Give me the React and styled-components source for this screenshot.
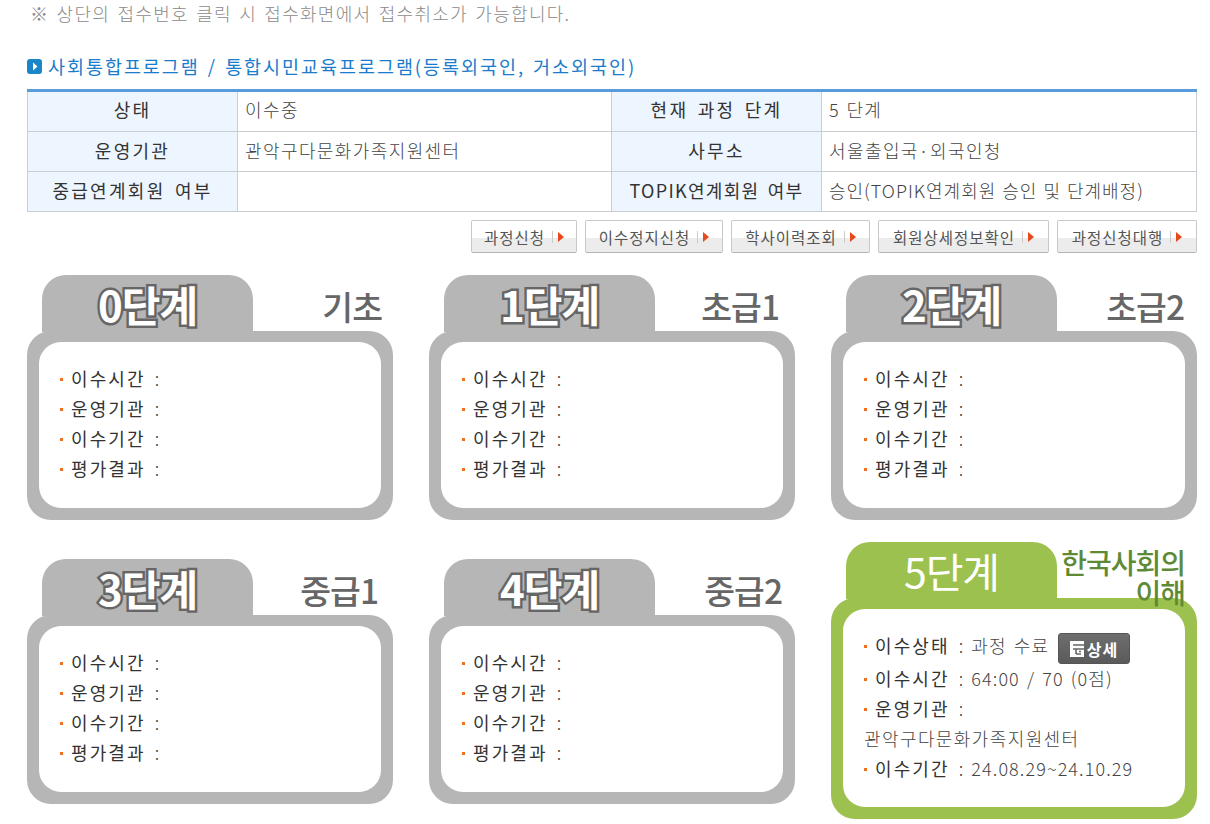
import React from 'react';
import styled, { createGlobalStyle } from 'styled-components';

const GlobalStyle = createGlobalStyle`
  html, body {
    margin: 0;
    padding: 0;
    background: #fff;
  }
  body {
    font-family: "Noto Sans CJK KR", "Liberation Sans", sans-serif;
    color: #333;
  }
`;

const Page = styled.div`
  width: 1170px;
  padding: 0 13px 0 27px;
`;

const Notice = styled.p`
  margin: 0;
  padding-left: 3px;
  height: 28px;
  font-size: 18px;
  line-height: 27px;
  letter-spacing: 1.3px;
  word-spacing: 2px;
  color: #8a8a8a;
  font-weight: 300;
  white-space: nowrap;
`;

const SectionTitle = styled.h2`
  display: flex;
  align-items: center;
  gap: 6px;
  margin: 24px 0 9px;
  height: 28px;
  font-size: 18.5px;
  line-height: 28px;
  font-weight: 400;
  letter-spacing: 1.95px;
  word-spacing: 2px;
  color: #1a7ccb;
  white-space: nowrap;
`;

const InfoTable = styled.table`
  width: 1169px;
  table-layout: fixed;
  border-collapse: collapse;
  border-top: 3px solid #5a9bdc;
  font-size: 18px;
`;

const HeadCell = styled.th`
  width: ${(props) => props.$width}px;
  height: ${(props) => (props.$first ? '41px' : '40px')};
  padding: 0 0 ${(props) => (props.$first ? '6px' : '4px')};
  box-sizing: border-box;
  background: #edf5fe;
  border: 1px solid #c9cdd2;
  border-top-color: ${(props) => (props.$first ? '#5a9bdc' : '#c9cdd2')};
  font-weight: 400;
  letter-spacing: ${(props) => (props.$tight ? '1.3px' : '2.3px')};
  word-spacing: 3px;
  color: #333;
  text-align: center;
  white-space: nowrap;
`;

const ValueCell = styled.td`
  width: ${(props) => props.$width}px;
  height: ${(props) => (props.$first ? '41px' : '40px')};
  padding: 0 0 ${(props) => (props.$first ? '6px' : '4px')} 7px;
  box-sizing: border-box;
  border: 1px solid #c9cdd2;
  border-top-color: ${(props) => (props.$first ? '#5a9bdc' : '#c9cdd2')};
  font-weight: 300;
  letter-spacing: ${(props) => (props.$tight ? '1px' : '1.4px')};
  word-spacing: 1px;
  color: #444;
  white-space: nowrap;
`;

const ButtonRow = styled.div`
  display: flex;
  justify-content: flex-end;
  gap: 8px;
  margin: 8px 0 22px;
`;

const ActionButton = styled.button`
  display: flex;
  align-items: center;
  justify-content: center;
  gap: 7px;
  width: ${(props) => props.$width}px;
  height: 33px;
  padding: 0;
  border: 1px solid #c8c8c8;
  border-bottom-color: #b5b5b5;
  border-radius: 2px;
  background: linear-gradient(#fff 0, #fff 55%, #ececec 55%, #ececec 100%);
  font-family: inherit;
  font-size: 15.5px;
  letter-spacing: 1px;
  color: #555;
  white-space: nowrap;
`;

const ButtonArrow = styled.span`
  display: flex;
  align-items: center;
  gap: 5px;
  &::before {
    content: '';
    width: 1px;
    height: 12px;
    background: #ccc;
  }
  &::after {
    content: '';
    border-left: 6px solid #e8481c;
    border-top: 5px solid transparent;
    border-bottom: 5px solid transparent;
  }
`;

const CardGrid = styled.div`
  display: grid;
  grid-template-columns: repeat(3, 366px);
  column-gap: 36px;
  row-gap: 39px;
  align-items: start;
`;

const Card = styled.section`
  --tone: ${(props) => (props.$done ? '#9cc14f' : '#b6b6b6')};
  margin-top: ${(props) => (props.$done ? '-17px' : '0')};
`;

const CardHead = styled.header`
  display: flex;
  height: 56px;
`;

const Tab = styled.div`
  width: 211px;
  margin-left: 15px;
  margin-bottom: -1px;
  display: flex;
  align-items: center;
  justify-content: center;
  background: var(--tone);
  border-radius: 24px 24px 0 0;
`;

const StepName = styled.span`
  font-size: 42px;
  font-weight: 700;
  letter-spacing: -1px;
  line-height: 1;
  color: #fff;
  -webkit-text-stroke: 5px #666;
  paint-order: stroke fill;
`;

const DoneStepName = styled.span`
  font-size: 41px;
  font-weight: 400;
  letter-spacing: -1px;
  line-height: 1;
  color: #fff;
`;

const LevelName = styled.div`
  flex: 1;
  padding: 14px ${(props) => props.$right}px 0 0;
  text-align: right;
  font-size: 33.5px;
  font-weight: 500;
  line-height: 34px;
  letter-spacing: -1px;
  color: #666;
`;

const DoneLevelName = styled.div`
  flex: 1;
  position: relative;
  z-index: 1;
  padding: 5px 12px 0 0;
  text-align: right;
  font-size: 28px;
  font-weight: 500;
  line-height: 30px;
  letter-spacing: -1px;
  color: #5f8a35;
`;

const CardBody = styled.div`
  height: ${(props) => (props.$done ? '198px' : '166px')};
  padding: 11px 12px 12px;
  background: var(--tone);
  border-radius: 24px;
`;

const CardInner = styled.div`
  height: 100%;
  box-sizing: border-box;
  padding: 21px 21px 0;
  background: #fff;
  border-radius: 22px;
`;

const Line = styled.div`
  display: flex;
  align-items: center;
  box-sizing: border-box;
  height: ${(props) => (props.$tall ? '33px' : '30px')};
  padding-bottom: ${(props) => (props.$tall ? '4px' : '0')};
  font-size: 18px;
  letter-spacing: 2.1px;
  white-space: nowrap;
  color: #333;
`;

const Bullet = styled.i`
  flex: none;
  width: 3px;
  height: 3px;
  margin: 3px 8px 0 0;
  background: #f0701f;
`;

const Value = styled.span`
  margin-left: 9px;
  font-weight: 300;
  letter-spacing: 1.1px;
  word-spacing: 2px;
  color: #444;
`;

const PlainValue = styled.span`
  font-weight: 300;
  letter-spacing: 1.4px;
  color: #444;
`;

const DetailButton = styled.button`
  display: flex;
  align-items: center;
  gap: 3px;
  justify-content: center;
  flex: none;
  width: 72px;
  height: 31px;
  margin: 8px 0 0 9px;
  padding: 0;
  border: 1px solid #555;
  border-radius: 3px;
  background: linear-gradient(#6e6e6e, #5a5a5a);
  font-family: inherit;
  font-size: 16px;
  font-weight: 700;
  letter-spacing: 1px;
  color: #fff;
`;

const infoRows = [
  ['상태', '이수중', '현재 과정 단계', '5 단계'],
  ['운영기관', '관악구다문화가족지원센터', '사무소', '서울출입국·외국인청'],
  ['중급연계회원 여부', '', 'TOPIK연계회원 여부', '승인(TOPIK연계회원 승인 및 단계배정)'],
];

const actions = [
  ['과정신청', 106],
  ['이수정지신청', 138],
  ['학사이력조회', 139],
  ['회원상세정보확인', 171],
  ['과정신청대행', 140],
];

const grayCards = [
  { step: '0단계', level: '기초', right: 11 },
  { step: '1단계', level: '초급1', right: 16 },
  { step: '2단계', level: '초급2', right: 13 },
  { step: '3단계', level: '중급1', right: 15 },
  { step: '4단계', level: '중급2', right: 13 },
];

const labels = ['이수시간', '운영기관', '이수기간', '평가결과'];

const PlayIcon = () => (
  <svg width="15" height="15" viewBox="0 0 15 15">
    <rect width="15" height="15" rx="3" fill="#1a86c8" />
    <path d="M6 3.5 L10.5 7.5 L6 11.5 Z" fill="#fff" />
  </svg>
);

const DocIcon = () => (
  <svg width="14" height="16" viewBox="0 0 14 16">
    <path d="M0 0 H14 V16 H0 Z" fill="#fff" />
    <path d="M3 4 H14 M3 8 H14 M6 8 V13 M6 13 H11 M9 10.5 H11" stroke="#666" strokeWidth="1.6" fill="none" />
  </svg>
);

const GrayCard = ({ step, level, right }) => (
  <Card>
    <CardHead>
      <Tab>
        <StepName>{step}</StepName>
      </Tab>
      <LevelName $right={right}>{level}</LevelName>
    </CardHead>
    <CardBody>
      <CardInner>
        {labels.map((label) => (
          <Line key={label}>
            <Bullet />
            {label}
            <Value>:</Value>
          </Line>
        ))}
      </CardInner>
    </CardBody>
  </Card>
);

const DoneCard = () => (
  <Card $done>
    <CardHead>
      <Tab>
        <DoneStepName>5단계</DoneStepName>
      </Tab>
      <DoneLevelName>
        한국사회의
        <br />
        이해
      </DoneLevelName>
    </CardHead>
    <CardBody $done>
      <CardInner>
        <Line $tall>
          <Bullet />
          이수상태
          <Value>: 과정 수료</Value>
          <DetailButton>
            <DocIcon />
            상세
          </DetailButton>
        </Line>
        <Line>
          <Bullet />
          이수시간
          <Value>: 64:00 / 70 (0점)</Value>
        </Line>
        <Line>
          <Bullet />
          운영기관
          <Value>:</Value>
        </Line>
        <Line>
          <PlainValue>관악구다문화가족지원센터</PlainValue>
        </Line>
        <Line>
          <Bullet />
          이수기간
          <Value>: 24.08.29~24.10.29</Value>
        </Line>
      </CardInner>
    </CardBody>
  </Card>
);

const App = () => (
  <Page>
    <GlobalStyle />
    <Notice>※ 상단의 접수번호 클릭 시 접수화면에서 접수취소가 가능합니다.</Notice>
    <SectionTitle>
      <PlayIcon />
      사회통합프로그램 / 통합시민교육프로그램(등록외국인, 거소외국인)
    </SectionTitle>
    <InfoTable>
      <tbody>
        {infoRows.map(([h1, v1, h2, v2], i) => (
          <tr key={h1}>
            <HeadCell $width={210} $first={i === 0}>{h1}</HeadCell>
            <ValueCell $width={374} $first={i === 0}>{v1}</ValueCell>
            <HeadCell $width={210} $first={i === 0} $tight={i === 2}>{h2}</HeadCell>
            <ValueCell $width={375} $first={i === 0} $tight={i === 2}>{v2}</ValueCell>
          </tr>
        ))}
      </tbody>
    </InfoTable>
    <ButtonRow>
      {actions.map(([label, width]) => (
        <ActionButton key={label} $width={width}>
          {label}
          <ButtonArrow />
        </ActionButton>
      ))}
    </ButtonRow>
    <CardGrid>
      {grayCards.map((card) => (
        <GrayCard key={card.step} {...card} />
      ))}
      <DoneCard />
    </CardGrid>
  </Page>
);

export default App;
